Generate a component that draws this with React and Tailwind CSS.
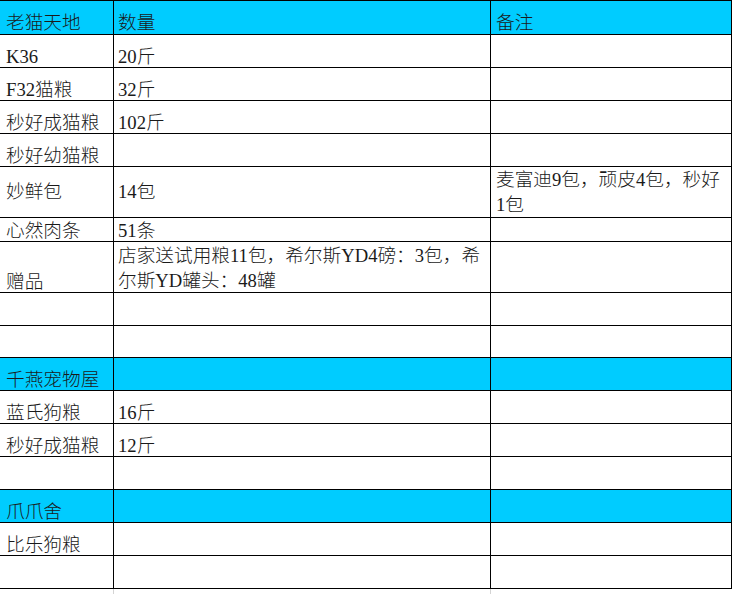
import React from "react";

// spreadsheet rows: h = row height incl. bottom border
const rows = [
  { h: "h-[34px]", blue: true, head: true, cells: ["老猫天地", "数量", "备注"] },
  { h: "h-[33px]", cells: ["K36", "20斤", ""] },
  { h: "h-[33px]", cells: ["F32猫粮", "32斤", ""] },
  { h: "h-[33px]", cells: ["秒好成猫粮", "102斤", ""] },
  { h: "h-[33px]", cells: ["秒好幼猫粮", "", ""] },
  {
    h: "h-[50px]",
    center: true,
    cells: ["妙鲜包", "14包", ["麦富迪9包，顽皮4包，秒好", "1包"]],
  },
  { h: "h-[25px]", cells: ["心然肉条", "51条", ""] },
  {
    h: "h-[51px]",
    cells: ["赠品", ["店家送试用粮11包，希尔斯YD4磅：3包，希", "尔斯YD罐头：48罐"], ""],
  },
  { h: "h-[33px]", cells: ["", "", ""] },
  { h: "h-[32px]", cells: ["", "", ""] },
  { h: "h-[33px]", blue: true, cells: ["千燕宠物屋", "", ""] },
  { h: "h-[33px]", cells: ["蓝氏狗粮", "16斤", ""] },
  { h: "h-[33px]", cells: ["秒好成猫粮", "12斤", ""] },
  { h: "h-[33px]", cells: ["", "", ""] },
  { h: "h-[33px]", blue: true, cells: ["爪爪舍", "", ""] },
  { h: "h-[33px]", cells: ["比乐狗粮", "", ""] },
  { h: "h-[33px]", cells: ["", "", ""] },
];

const pads = ["pl-[6px]", "pl-[4px]", "pl-[5px]"];

function Cell({ value, idx, center, head }) {
  const multi = Array.isArray(value);
  return (
    <div
      className={`flex min-w-0 border-r border-b border-black ${pads[idx]} ${
        center ? "items-center" : "items-end"
      } ${head ? "pb-[1px]" : ""}`}
    >
      {multi ? (
        <div className={`whitespace-nowrap leading-[25px] ${center ? "" : "mb-[-1px]"}`}>
          {value.map((line, i) => (
            <div key={i}>{line}</div>
          ))}
        </div>
      ) : (
        <div className="whitespace-nowrap leading-[20px]">{value}</div>
      )}
    </div>
  );
}

export default function App() {
  return (
    <div
      className="w-[732px] h-[594px] overflow-hidden bg-white text-[18.67px] font-light text-[#1a1a1a]"
      style={{ fontFamily: '"Liberation Serif", "Noto Sans CJK SC", serif' }}
    >
      <div className="border-t border-black">
        {rows.map((r, i) => (
          <div
            key={i}
            className={`grid grid-cols-[114px_377px_241px] ${r.h} ${r.blue ? "bg-[#00ccff]" : ""}`}
          >
            {r.cells.map((c, j) => (
              <Cell key={j} value={c} idx={j} center={r.center} head={r.head} />
            ))}
          </div>
        ))}
        <div className="grid grid-cols-[114px_377px_241px] h-[10px]">
          <div className="border-r border-[#d4d4d4]" />
          <div className="border-r border-[#d4d4d4]" />
          <div />
        </div>
      </div>
    </div>
  );
}
